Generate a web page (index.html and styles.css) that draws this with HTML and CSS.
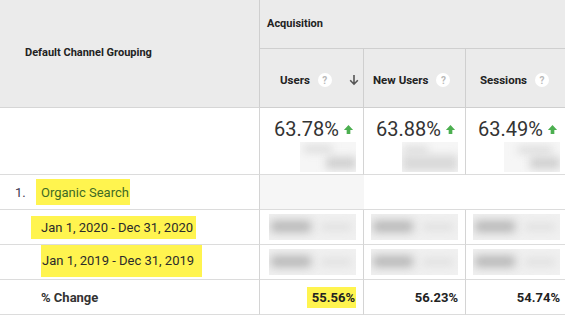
FILE: index.html
```html
<!DOCTYPE html>
<html>
<head>
<meta charset="utf-8">
<link rel="stylesheet" href="styles.css">
</head>
<body>
<div class="report">
  <div class="cell head dim-head">Default Channel Grouping</div>
  <div class="cell head group-head">Acquisition</div>

  <div class="cell head metric users">
    <span class="label">Users</span><span class="help">?</span>
    <svg class="sort" viewBox="0 0 10 12" width="10" height="12"><path d="M5 1v9M1.2 6.3L5 10.2 8.8 6.3" fill="none" stroke="#555" stroke-width="1.6"/></svg>
  </div>
  <div class="cell head metric newusers"><span class="label">New Users</span><span class="help">?</span></div>
  <div class="cell head metric sessions"><span class="label">Sessions</span><span class="help">?</span></div>

  <div class="cell summary-dim"></div>
  <div class="cell summary">
    <div class="big">63.78%<svg class="up" viewBox="0 0 12 12" width="11" height="11"><path d="M6 1L11 6.5H8V11H4V6.5H1Z" fill="#4caf50"/></svg></div>
    <div class="smudge s1"><i></i><b></b></div>
  </div>
  <div class="cell summary">
    <div class="big">63.88%<svg class="up" viewBox="0 0 12 12" width="11" height="11"><path d="M6 1L11 6.5H8V11H4V6.5H1Z" fill="#4caf50"/></svg></div>
    <div class="smudge s2"><i></i><b></b></div>
  </div>
  <div class="cell summary">
    <div class="big">63.49%<svg class="up" viewBox="0 0 12 12" width="11" height="11"><path d="M6 1L11 6.5H8V11H4V6.5H1Z" fill="#4caf50"/></svg></div>
    <div class="smudge s3"><i></i><b></b></div>
  </div>

  <div class="cell dim row-1"><span class="idx">1.</span><span class="hl channel">Organic Search</span></div>
  <div class="cell blank shaded"></div>
  <div class="cell blank"></div>
  <div class="cell blank last"></div>

  <div class="cell dim"><span class="hl date d1">Jan 1, 2020 - Dec 31, 2020</span></div>
  <div class="cell val"><div class="rowsmudge"><i></i><b></b></div></div>
  <div class="cell val"><div class="rowsmudge"><i></i><b></b></div></div>
  <div class="cell val"><div class="rowsmudge"><i></i><b></b></div></div>

  <div class="cell dim"><span class="hl date d2">Jan 1, 2019 - Dec 31, 2019</span></div>
  <div class="cell val"><div class="rowsmudge"><i></i><b></b></div></div>
  <div class="cell val"><div class="rowsmudge"><i></i><b></b></div></div>
  <div class="cell val"><div class="rowsmudge"><i></i><b></b></div></div>

  <div class="cell dim change-label">% Change</div>
  <div class="cell change"><span class="hl pct">55.56%</span></div>
  <div class="cell change"><span class="pct">56.23%</span></div>
  <div class="cell change"><span class="pct">54.74%</span></div>
</div>
</body>
</html>
```

FILE: styles.css
```css
* { box-sizing: border-box; }
html, body { margin: 0; padding: 0; background: #fff; }
body {
  font-family: Roboto, "Liberation Sans", Arial, sans-serif;
  color: #333;
  overflow: hidden;
  width: 565px;
  height: 317px;
}
.report {
  display: grid;
  grid-template-columns: 260px 104px 102px 102px;
  grid-template-rows: 49px 59px 67px 35px 35px 35px 35px;
  width: 568px;
}
.cell {
  border-right: 1px solid #d4d4d4;
  border-bottom: 1px solid #dcdcdc;
  display: flex;
  align-items: center;
  position: relative;
}
.head {
  background: #ebebeb;
  color: #222;
  font-weight: 700;
  font-size: 11px;
  border-color: #cfcfcf;
}
.dim-head {
  grid-row: 1 / span 2;
  padding-left: 25px;
  padding-bottom: 2px;
  border-bottom-color: #d6d6d6;
}
.group-head {
  grid-column: 2 / span 3;
  padding-left: 7px;
  padding-bottom: 2px;
}
.metric { padding-top: 4px; }
.metric .label { font-size: 11.5px; }
.users { padding-left: 20px; }
.newusers { padding-left: 9px; }
.sessions { padding-left: 14px; }
.help {
  width: 14px;
  height: 14px;
  border-radius: 50%;
  background: #fff;
  color: #b9b9b9;
  font-size: 10px;
  font-weight: 700;
  display: inline-flex;
  align-items: center;
  justify-content: center;
  margin-left: 8px;
}
.sort { margin-left: auto; margin-right: 4px; }

.summary-dim { background: #fff; }
.summary {
  flex-direction: column;
  align-items: flex-end;
  justify-content: flex-start;
  padding: 9px 9px 0 0;
}
.big {
  font-size: 20px;
  color: #333;
  display: flex;
  align-items: center;
  line-height: 24px;
}
.up { margin-left: 4px; margin-top: 1px; }
.smudge {
  position: relative;
  width: 56px;
  height: 30px;
  margin-top: 1px;
  margin-right: -2px;
  background: #f6f6f6;
  overflow: hidden;
}
.smudge i, .smudge b, .rowsmudge i, .rowsmudge b {
  position: absolute;
  display: block;
  filter: blur(4px);
}
.smudge i { left: 4px; top: 4px; width: 28px; height: 6px; background: #d6d6d6; }
.smudge b { left: 26px; top: 15px; width: 30px; height: 12px; background: #cfcfcf; }
.s2 i { left: 2px; top: 5px; width: 24px; }
.s2 b { left: 0; top: 13px; width: 56px; height: 16px; background: #d9d9d9; }
.s3 i { left: 14px; top: 5px; width: 34px; }

.dim { font-size: 13px; }
.row-1 { padding-left: 15px; }
.idx { color: #3d3550; width: 21px; }
.hl { background: #fff44f; }
.channel {
  color: #3e6b25;
  padding: 6px 1px 5px 5px;
}
.date { color: #2b2b2b; }
.d1 { margin-left: 31px; padding: 4px 3px 4px 10px; }
.d2 { margin-left: 41px; padding: 8px 8px 9px 1px; align-self: flex-start; }
.blank { border-right: none; }
.shaded { background: #f6f6f6; }
.val {
  justify-content: flex-end;
  padding-right: 7px;
}
.rowsmudge {
  position: relative;
  width: 87px;
  height: 26px;
  background: #f0f0f0;
  overflow: hidden;
}
.rowsmudge i { left: 2px; top: 7px; width: 40px; height: 11px; background: #b4b4b4; filter: blur(5px); }
.rowsmudge b { left: 52px; top: 10px; width: 30px; height: 6px; background: #dcdcdc; }

.change-label {
  font-weight: 700;
  padding-left: 41px;
}
.change {
  justify-content: flex-end;
  padding-right: 7px;
  font-size: 13px;
  font-weight: 700;
  color: #222;
}
.pct.hl { padding: 3px 1px 3px 5px; }
```
